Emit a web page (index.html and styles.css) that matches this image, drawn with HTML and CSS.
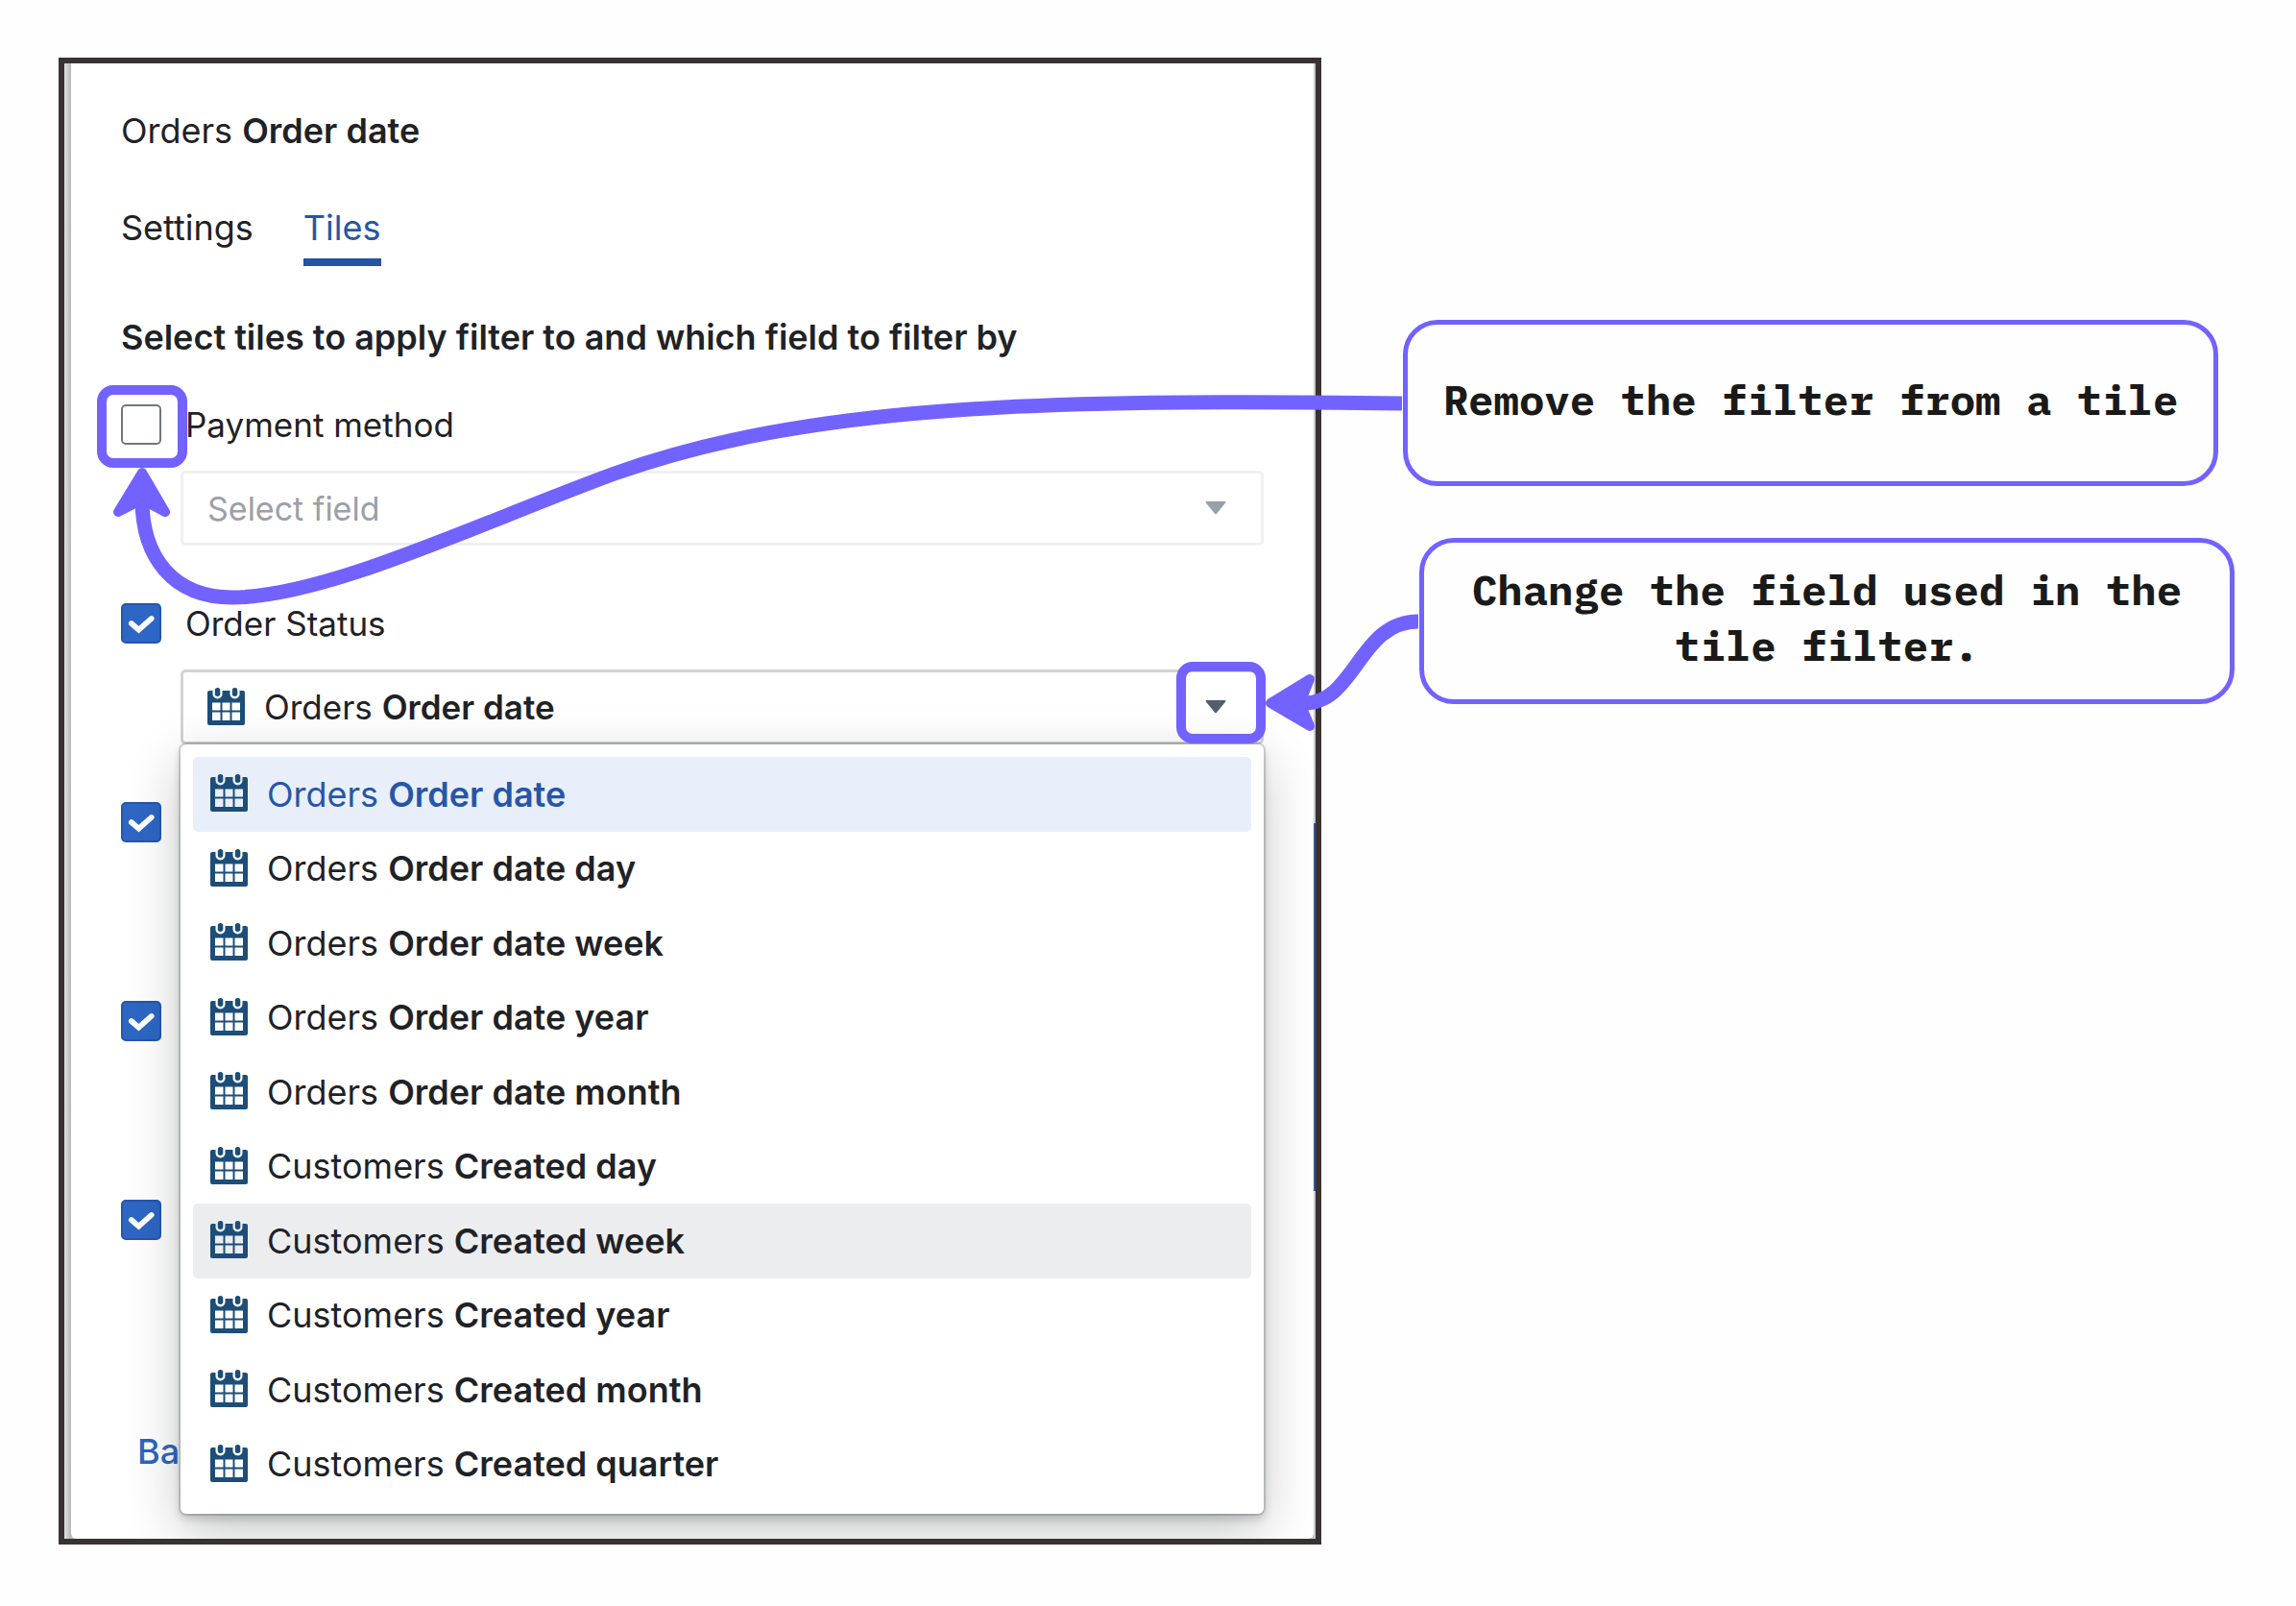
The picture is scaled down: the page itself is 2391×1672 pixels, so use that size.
FILE: index.html
```html
<!DOCTYPE html>
<html lang="en">
<head>
<meta charset="utf-8">
<meta name="viewport" content="width=device-width, initial-scale=1">
<title>Dashboard filter tiles</title>
<link rel="stylesheet" href="styles.css">
</head>
<body>
<svg class="defs" aria-hidden="true">
  <symbol id="calendar" viewBox="0 0 39 39">
    <path fill="#1c4e79" fill-rule="evenodd" d="M2 3H37Q39 3 39 5V37Q39 39 37 39H2Q0 39 0 37V5Q0 3 2 3ZM5 15.500V23.500H13.500V15.500ZM15.500 15.500V23.500H23.500V15.500ZM25.500 15.500V23.500H34V15.500ZM5 25.500V34H13.500V25.500ZM15.500 25.500V34H23.500V25.500ZM25.500 25.500V34H34V25.500Z"/>
    <rect class="ring" x="5.500" y="-2" width="10" height="13.500" rx="5"/>
    <rect class="ring" x="23.500" y="-2" width="10" height="13.500" rx="5"/>
    <rect fill="#1c4e79" x="7.800" y="0" width="5.500" height="9" rx="2.700"/>
    <rect fill="#1c4e79" x="25.800" y="0" width="5.500" height="9" rx="2.700"/>
  </symbol>
  <symbol id="caret" viewBox="0 0 22 14">
    <path fill="currentColor" d="M1.500 0H20.500Q22 0 21.200 1.500L12 12.800Q11 14 10 12.800L0.800 1.500Q0 0 1.500 0Z"/>
  </symbol>
  <symbol id="tick" viewBox="0 0 41 41">
    <path fill="none" stroke="#fff" stroke-width="5.500" stroke-linecap="round" stroke-linejoin="miter" d="M10.500 20.500L18 27L31 15.500"/>
  </symbol>
</svg>

<main class="stage">
  <section class="frame">
    <div class="sheet">
      <h1 class="title">Orders <b>Order date</b></h1>
      <nav class="tabs">
        <button class="tab" type="button">Settings</button>
        <button class="tab tab-active" type="button">Tiles</button>
      </nav>
      <h2 class="heading">Select tiles to apply filter to and which field to filter by</h2>

      <div class="tiles">
        <div class="tile">
          <div class="tile-name">
            <span class="check"><input type="checkbox" id="tile-payment"></span>
            <label for="tile-payment">Payment method</label>
          </div>
          <div class="field">
            <select class="control control-disabled" aria-label="Payment method field" disabled>
              <option>Select field</option>
            </select>
            <svg class="caret caret-muted" aria-hidden="true"><use href="#caret"/></svg>
          </div>
        </div>

        <div class="tile">
          <div class="tile-name">
            <span class="check"><input type="checkbox" id="tile-status" checked><svg aria-hidden="true"><use href="#tick"/></svg></span>
            <label for="tile-status">Order Status</label>
          </div>
          <div class="field">
            <button class="control" type="button" aria-haspopup="listbox" aria-expanded="true">
              <svg class="calendar" aria-hidden="true"><use href="#calendar"/></svg>
              <span>Orders <b>Order date</b></span>
            </button>
            <svg class="caret" aria-hidden="true"><use href="#caret"/></svg>
            <ul class="menu" role="listbox" aria-label="Field">
              <li class="option option-selected" role="option" aria-selected="true"><svg class="calendar" aria-hidden="true"><use href="#calendar"/></svg><span>Orders <b>Order date</b></span></li>
              <li class="option" role="option"><svg class="calendar" aria-hidden="true"><use href="#calendar"/></svg><span>Orders <b>Order date day</b></span></li>
              <li class="option" role="option"><svg class="calendar" aria-hidden="true"><use href="#calendar"/></svg><span>Orders <b>Order date week</b></span></li>
              <li class="option" role="option"><svg class="calendar" aria-hidden="true"><use href="#calendar"/></svg><span>Orders <b>Order date year</b></span></li>
              <li class="option" role="option"><svg class="calendar" aria-hidden="true"><use href="#calendar"/></svg><span>Orders <b>Order date month</b></span></li>
              <li class="option" role="option"><svg class="calendar" aria-hidden="true"><use href="#calendar"/></svg><span>Customers <b>Created day</b></span></li>
              <li class="option option-hover" role="option"><svg class="calendar" aria-hidden="true"><use href="#calendar"/></svg><span>Customers <b>Created week</b></span></li>
              <li class="option" role="option"><svg class="calendar" aria-hidden="true"><use href="#calendar"/></svg><span>Customers <b>Created year</b></span></li>
              <li class="option" role="option"><svg class="calendar" aria-hidden="true"><use href="#calendar"/></svg><span>Customers <b>Created month</b></span></li>
              <li class="option" role="option"><svg class="calendar" aria-hidden="true"><use href="#calendar"/></svg><span>Customers <b>Created quarter</b></span></li>
            </ul>
          </div>
        </div>

        <div class="tile">
          <div class="tile-name">
            <span class="check"><input type="checkbox" aria-label="Tile 3" checked><svg aria-hidden="true"><use href="#tick"/></svg></span>
          </div>
          <div class="field field-covered"></div>
        </div>
        <div class="tile">
          <div class="tile-name">
            <span class="check"><input type="checkbox" aria-label="Tile 4" checked><svg aria-hidden="true"><use href="#tick"/></svg></span>
          </div>
          <div class="field field-covered"></div>
        </div>
        <div class="tile">
          <div class="tile-name">
            <span class="check"><input type="checkbox" aria-label="Tile 5" checked><svg aria-hidden="true"><use href="#tick"/></svg></span>
          </div>
          <div class="field field-covered"></div>
        </div>
      </div>

      <a class="back" href="#">Back</a>
    </div>
  </section>

  <aside class="notes">
    <p class="note note-remove">Remove the filter from a tile</p>
    <p class="note note-change">Change the field used in the tile filter.</p>
  </aside>

  <svg class="arrows" viewBox="0 0 2391 1672" aria-hidden="true">
    <g fill="none" stroke="#7262ff">
      <rect x="106" y="406" width="84" height="76" rx="12" stroke-width="10"/>
      <rect x="1230" y="694" width="83" height="75" rx="12" stroke-width="10"/>
      <path stroke-width="15" d="M1460 420C1080 415 840 422 640 493C500 544 340 622 242 622C180 622 148 580 148 520"/>
      <path stroke-width="15" d="M1477 647C1415 647 1412 732 1358 732"/>
    </g>
    <g fill="#7262ff" stroke="#7262ff" stroke-width="10" stroke-linejoin="round">
      <path d="M148 492L123 533L148 520L172 533Z"/>
      <path d="M1323 732L1364 707L1354 732L1364 756Z"/>
    </g>
  </svg>
</main>
</body>
</html>
```
FILE: styles.css
```css
* {
  box-sizing: border-box;
}

body {
  margin: 0;
  background: #fefefe;
  color: #1f2226;
  font: 400 36px/44px Inter, "Liberation Sans", sans-serif;
}

b {
  font-weight: 600;
}

button {
  font: inherit;
  color: inherit;
  background: none;
  border: 0;
  padding: 0;
}

.defs {
  position: absolute;
  width: 0;
  height: 0;
}

.stage {
  position: relative;
  display: grid;
  grid-template-columns: 1315fr 951fr;
  align-items: start;
  padding: 60px 64px 63px 61px;
}

/* Side panel */
.frame {
  overflow: hidden;
  border: 6px solid #3a3231;
  padding: 0 2px 0 7px;
  background:
    linear-gradient(#3c5590, #3c5590) right 0 top 791px / 2px 383px no-repeat,
    linear-gradient(90deg, #e2e2e4, #b6b6b8 7px, #c9c9c9 8px);
}

.sheet {
  padding: 48px 52px 69px;
  border-radius: 0 0 6px 6px;
  background: #fff;
}

.title {
  margin: 0 0 57px;
  font-size: 36px;
  font-weight: 400;
}

.tabs {
  display: flex;
  gap: 52px;
  margin-bottom: 52px;
}

.tab {
  padding-bottom: 10px;
  border-bottom: 8px solid transparent;
}

.tab-active {
  color: #2656a8;
  border-color: #2453a2;
}

.heading {
  margin: 0 0 47px;
  font-size: 36px;
  font-weight: 600;
}

.tiles {
  display: flex;
  flex-direction: column;
  gap: 59px;
}

.tile {
  display: flex;
  flex-direction: column;
  gap: 26px;
}

.tile-name {
  display: flex;
  align-items: center;
  gap: 25px;
  height: 44px;
}

.tile-name label {
  font-size: 35px;
}

.check {
  display: grid;
  width: 42px;
  height: 42px;
}

.check > * {
  grid-area: 1 / 1;
  width: 100%;
  height: 100%;
  margin: 0;
}

.check svg {
  pointer-events: none;
}

.check input {
  appearance: none;
  border: 2px solid #72767f;
  border-radius: 5px;
  background: #fff;
}

.check input:checked {
  border-color: #2656ad;
  background: #2d66c4;
}

.field {
  position: relative;
  display: grid;
  grid-template-columns: 1fr auto;
  align-items: center;
  height: 78px;
  margin-left: 62px;
}

.control {
  grid-area: 1 / 1 / 2 / 3;
  display: flex;
  align-items: center;
  gap: 20px;
  width: 100%;
  height: 78px;
  padding: 0 25px;
  border: 3px solid #d3d3d4;
  border-radius: 5px;
  background: #fff;
  font-size: 35px;
  text-align: left;
}

.control-disabled {
  appearance: none;
  border-color: #eff0f0;
  color: #9ba0a8;
  font-family: inherit;
  font-size: 34px;
  opacity: 1;
}

.caret {
  grid-area: 1 / 2;
  width: 22px;
  height: 14px;
  margin-right: 39px;
  color: #535f6b;
  pointer-events: none;
}

.caret-muted {
  color: #98a0aa;
}

.calendar {
  flex: none;
  width: 39px;
  height: 39px;
  margin-bottom: 2px;
}

.ring {
  fill: var(--surface, #fff);
}

/* Open drop-down */
.menu {
  position: absolute;
  z-index: 1;
  top: 100%;
  left: 0;
  right: 0;
  display: grid;
  grid-auto-rows: 1fr;
  height: 801px;
  margin: 0;
  padding: 13px;
  list-style: none;
  border-radius: 6px;
  background: #fff;
  box-shadow:
    0 0 0 2px rgba(17, 20, 24, 0.15),
    0 5px 10px rgba(17, 20, 24, 0.2),
    0 18px 54px rgba(17, 20, 24, 0.24);
}

.option {
  display: flex;
  align-items: center;
  gap: 20px;
  padding-left: 18px;
  border-radius: 5px;
}

.option-selected {
  --surface: #e8effa;
  background: #e8effa;
  color: #2656a8;
}

.option-hover {
  --surface: #ecedef;
  background: #ecedef;
}

.back {
  display: block;
  width: fit-content;
  margin: 93px 0 0 17px;
  color: #2d65c0;
  font-weight: 500;
  text-decoration: none;
}

/* Call-outs */
.notes {
  display: grid;
  gap: 54px;
  padding-top: 273px;
}

.note {
  display: grid;
  place-items: center;
  height: 173px;
  margin: 0;
  padding: 0 24px 8px;
  border: 5px solid #7262ff;
  border-radius: 36px;
  color: #1a1a1a;
  font: 700 44px/58px "IBM Plex Mono", "Liberation Mono", monospace;
  text-align: center;
}

.note-remove {
  margin: 0 17px 0 85px;
}

.note-change {
  margin-left: 102px;
}

.arrows {
  position: absolute;
  z-index: 2;
  top: 0;
  left: 0;
  width: 100%;
  pointer-events: none;
}
```
